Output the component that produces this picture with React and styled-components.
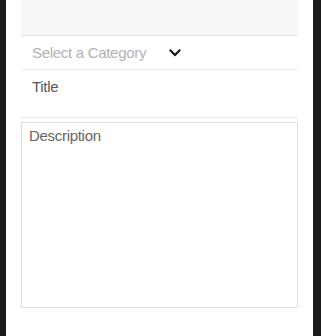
import React from "react";
import styled, { createGlobalStyle } from "styled-components";

const Global = createGlobalStyle`
  html, body { margin: 0; padding: 0; background: #1b1b1b; }
  body { font-family: "Liberation Sans", Arial, sans-serif; }
`;

const Screen = styled.div`
  width: 321px;
  height: 336px;
  display: flex;
  background: #1b1b1b;
`;

const Panel = styled.div`
  margin-left: 6px;
  width: 307px;
  height: 336px;
  background: #ffffff;
  padding: 0 15px;
  box-sizing: border-box;
  display: flex;
  flex-direction: column;
`;

const Header = styled.div`
  height: 35px;
  background: #f7f7f7;
  border-bottom: 1px solid #e3e3e3;
  flex-shrink: 0;
`;

const Row = styled.div`
  display: flex;
  align-items: ${(p) => (p.$top ? "flex-start" : "center")};
  height: ${(p) => p.$h}px;
  box-sizing: content-box;
  padding: ${(p) => (p.$top ? "8px 11px 0" : "0 11px")};
  box-sizing: border-box;
  border-bottom: 1px solid ${(p) => p.$line};
  flex-shrink: 0;
`;

const Label = styled.span`
  font-size: 15px;
  line-height: 18px;
  letter-spacing: -0.3px;
  color: ${(p) => p.$color};
  width: ${(p) => (p.$w ? `${p.$w}px` : "auto")};
  white-space: nowrap;
`;

const Chevron = styled.svg`
  width: 12px;
  height: 8px;
  display: block;
`;

const TextBox = styled.div`
  margin-top: 4px;
  height: 186px;
  border: 1px solid #dfdfdf;
  box-sizing: border-box;
  padding: 4px 7px;
`;

export default function App() {
  return (
    <>
      <Global />
      <Screen>
        <Panel>
          <Header />
          <Row $h={34} $line="#efefef">
            <Label $color="#b3b3b3" $w={137}>Select a Category</Label>
            <Chevron viewBox="0 0 12 8">
              <path d="M1.5 1.5 L6 6 L10.5 1.5" fill="none" stroke="#111" strokeWidth="2" strokeLinecap="square" />
            </Chevron>
          </Row>
          <Row $h={48} $line="#ebe8ee" $top>
            <Label $color="#575757">Title</Label>
          </Row>
          <TextBox>
            <Label $color="#666666">Description</Label>
          </TextBox>
        </Panel>
      </Screen>
    </>
  );
}
